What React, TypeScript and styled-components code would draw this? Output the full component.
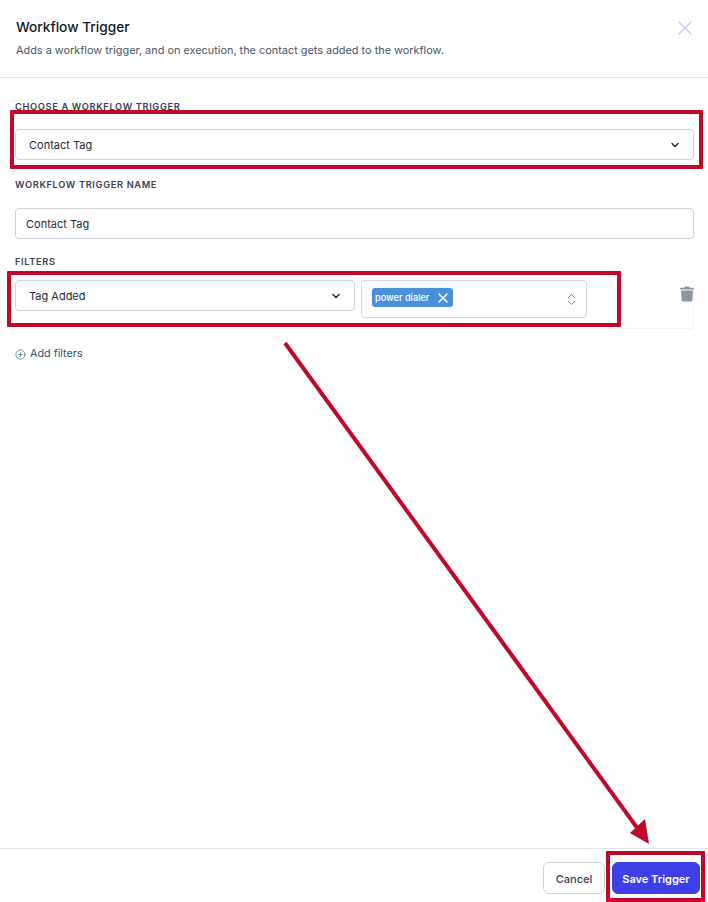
import React from "react";
import styled, { createGlobalStyle } from "styled-components";
import { ChevronDown, ChevronsUpDown, CirclePlus, X } from "lucide-react";

const GlobalStyle = createGlobalStyle`
    html, body {
        margin: 0;
        padding: 0;
        background: #fff;
    }
    * {
        box-sizing: border-box;
    }
`;

const Page = styled.div`
    position: relative;
    display: flex;
    flex-direction: column;
    width: 708px;
    height: 902px;
    overflow: hidden;
    font-family: Inter, "Liberation Sans", sans-serif;
    color: #1f2937;
`;

const Header = styled.header`
    display: flex;
    justify-content: space-between;
    height: 78px;
    padding: 18px 11px 0 16px;
    border-bottom: 1px solid #e2e4e8;
`;

const Title = styled.h1`
    margin: 0;
    font-size: 13.7px;
    line-height: 18px;
    font-weight: 500;
    color: #111827;
`;

const Subtitle = styled.p`
    margin: 6px 0 0;
    font-size: 10.9px;
    line-height: 16px;
    color: #4b5563;
`;

const CloseButton = styled.span`
    display: flex;
    margin: -2px 0 0;
    height: 24px;
    color: #c7d2f0;
`;

const Body = styled.main`
    flex: 1;
    display: flex;
    flex-direction: column;
    padding: 23px 14px 0 15px;
`;

const Label = styled.label<{ $gap: number }>`
    display: block;
    margin-bottom: ${(p) => p.$gap}px;
    font-size: 9.25px;
    line-height: 12px;
    font-weight: 600;
    letter-spacing: 0.65px;
    text-transform: uppercase;
    color: #374151;
`;

const Control = styled.div<{ $width?: number; $height?: number; $pad?: number }>`
    display: flex;
    align-items: center;
    justify-content: space-between;
    flex: none;
    width: ${(p) => (p.$width ? `${p.$width}px` : "100%")};
    height: ${(p) => p.$height || 31}px;
    padding: 0 12px 0 ${(p) => p.$pad ?? 13}px;
    border: 1px solid #cfd2d8;
    border-radius: 4px;
    background: #fff;
    font-size: 11px;
    color: #1f2937;
`;

const FieldGroup = styled.div<{ $bottom: number }>`
    margin-bottom: ${(p) => p.$bottom}px;
`;

const FilterCard = styled.div`
    display: flex;
    align-items: flex-start;
    height: 49px;
    gap: 6px;
    border-bottom: 1px solid #f1f2f4;
    border-right: 1px solid #f6f7f8;
    border-radius: 4px;
`;

const TagField = styled(Control)`
    padding: 0 7px 0 10px;
    border-color: #d4d6db;
`;

const Tag = styled.span`
    display: inline-flex;
    align-items: center;
    gap: 6px;
    height: 19px;
    margin-top: -3px;
    padding: 0 2px 0 3px;
    border-radius: 3px;
    background: #4a90d9;
    color: #fff;
    font-size: 9.2px;
    font-weight: 500;
`;

const TrashButton = styled.span`
    display: flex;
    margin: 6px -1px 0 auto;
    color: #8f95a3;
`;

const AddFilters = styled.div`
    display: flex;
    align-items: center;
    gap: 4px;
    margin-top: 17px;
    font-size: 10.8px;
    line-height: 16px;
    color: #2f5573;
`;

const Footer = styled.footer`
    display: flex;
    justify-content: flex-end;
    gap: 7px;
    height: 54px;
    padding: 13px 8px 0 0;
    border-top: 1px solid #e2e4e8;
`;

const Button = styled.button<{ $primary?: boolean }>`
    height: 32px;
    width: ${(p) => (p.$primary ? 88 : 62)}px;
    padding: 1px 0 0;
    border: 1px solid ${(p) => (p.$primary ? "#3f3fe8" : "#d1d5db")};
    border-radius: 6px;
    background: ${(p) => (p.$primary ? "#3f3fe8" : "#fff")};
    color: ${(p) => (p.$primary ? "#fff" : "#374151")};
    font-family: inherit;
    font-size: 11px;
    font-weight: ${(p) => (p.$primary ? 600 : 500)};
`;

// 스크린샷 위에 덧그린 빨간 강조 표시
const Highlight = styled.div<{ $x: number; $y: number; $w: number; $h: number }>`
    position: absolute;
    left: ${(p) => p.$x}px;
    top: ${(p) => p.$y}px;
    width: ${(p) => p.$w}px;
    height: ${(p) => p.$h}px;
    border: 4px solid #c1072a;
    border-radius: 1px;
    pointer-events: none;
`;

const ArrowOverlay = styled.svg`
    position: absolute;
    left: 0;
    top: 0;
    pointer-events: none;
`;

const TrashIcon = () => (
    <svg width="14" height="16" viewBox="0 0 14 16" fill="currentColor">
        <path d="M5 0.5h4l0.6 1.2H13.2c0.4 0 0.8 0.4 0.8 0.8v0.9H0V2.5c0-0.4 0.4-0.8 0.8-0.8h3.6z" />
        <path d="M1 4.4h12l-0.7 10c-0.1 0.7-0.6 1.1-1.2 1.1H2.9c-0.6 0-1.1-0.4-1.2-1.1z" />
    </svg>
);

export default function App() {
    return (
        <Page>
            <GlobalStyle />
            <Header>
                <div>
                    <Title>Workflow Trigger</Title>
                    <Subtitle>Adds a workflow trigger, and on execution, the contact gets added to the workflow.</Subtitle>
                </div>
                <CloseButton>
                    <X size={24} strokeWidth={1.5} />
                </CloseButton>
            </Header>
            <Body>
                <FieldGroup $bottom={19}>
                    <Label $gap={16}>Choose a workflow trigger</Label>
                    <Control>
                        Contact Tag
                        <ChevronDown size={12} strokeWidth={2.8} color="#1f2937" />
                    </Control>
                </FieldGroup>
                <FieldGroup $bottom={17}>
                    <Label $gap={17}>Workflow trigger name</Label>
                    <Control $pad={10}>Contact Tag</Control>
                </FieldGroup>
                <Label $gap={12}>Filters</Label>
                <FilterCard>
                    <Control $width={340}>
                        Tag Added
                        <ChevronDown size={12} strokeWidth={2.8} color="#1f2937" />
                    </Control>
                    <TagField $width={226} $height={38}>
                        <Tag>
                            power dialer
                            <X size={16} strokeWidth={2.2} />
                        </Tag>
                        <ChevronsUpDown size={15} strokeWidth={1.2} color="#6b7280" />
                    </TagField>
                    <TrashButton>
                        <TrashIcon />
                    </TrashButton>
                </FilterCard>
                <AddFilters>
                    <CirclePlus size={11} strokeWidth={1.4} />
                    Add filters
                </AddFilters>
            </Body>
            <Footer>
                <Button>Cancel</Button>
                <Button $primary>Save Trigger</Button>
            </Footer>
            <Highlight $x={10} $y={110} $w={693} $h={59} />
            <Highlight $x={7} $y={271} $w={614} $h={56} />
            <Highlight $x={606} $y={851} $w={99} $h={51} />
            <ArrowOverlay width="708" height="902" viewBox="0 0 708 902">
                <line x1="285" y1="343" x2="638" y2="829" stroke="#c1072a" strokeWidth="4" />
                <polygon points="649,844 630,833 645,819" fill="#c1072a" />
            </ArrowOverlay>
        </Page>
    );
}
